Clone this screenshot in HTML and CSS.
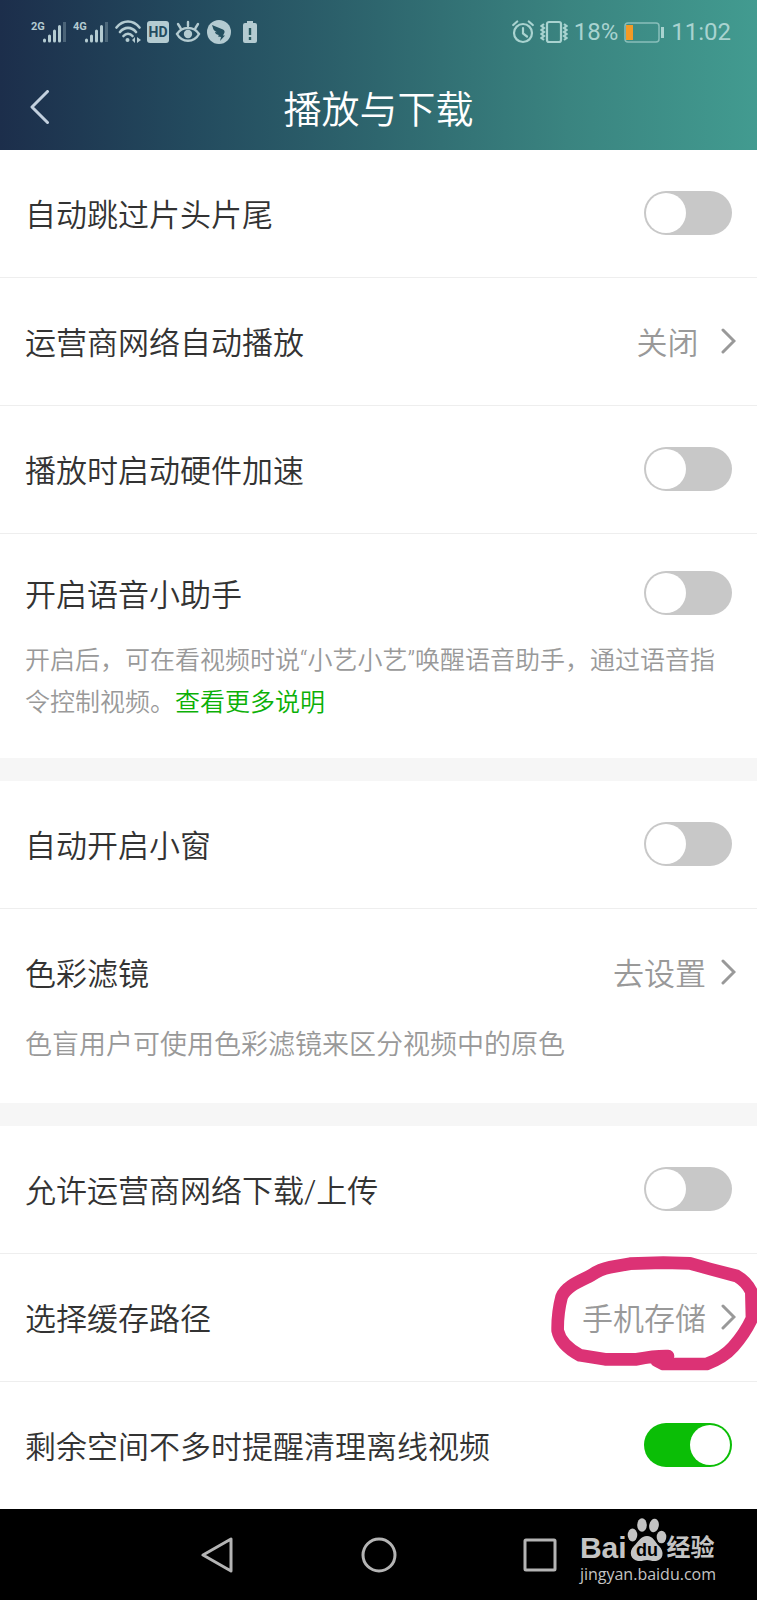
FILE: index.html
```html
<!DOCTYPE html>
<html lang="zh-CN">
<head>
  <meta charset="UTF-8">
  <meta name="viewport" content="width=device-width, initial-scale=1.0">
  <title>播放与下载</title>
  <link rel="stylesheet" href="styles.css">
</head>
<body>

<header class="header">
  <div class="status-bar">
    <div class="status-left">
      <svg width="36" height="24" viewBox="0 0 36 24">
        <text class="net" x="0" y="10">2G</text>
        <path d="M13.500 20v1M18.500 16v5M23.500 11v10M28.500 6.500v14.500" stroke="currentColor" stroke-width="3" stroke-linecap="round"/>
        <path d="M33.500 2v20" stroke="currentColor" stroke-width="3" opacity=".3"/>
      </svg>
      <svg width="36" height="24" viewBox="0 0 36 24">
        <text class="net" x="0" y="10">4G</text>
        <path d="M13.500 20v1M18.500 16v5M23.500 11v10M28.500 6.500v14.500" stroke="currentColor" stroke-width="3" stroke-linecap="round"/>
        <path d="M33.500 2v20" stroke="currentColor" stroke-width="3" opacity=".3"/>
      </svg>
      <svg width="26" height="24" viewBox="0 0 26 24" fill="none" stroke="currentColor" stroke-width="2.600" stroke-linecap="round">
        <path d="M1.500 7.500C8-.5 18-.5 24.500 7.500M5 12c4.500-5.500 11.500-5.500 16 0M8.500 16c2.500-3 6.500-3 9 0"/>
        <circle cx="12.500" cy="20" r="2" fill="currentColor" stroke="none"/>
        <path d="M20 17l-3 3 3 3zM22 17l4 3-4 3z" fill="currentColor" stroke="none"/>
      </svg>
      <svg width="22" height="24" viewBox="0 0 22 24">
        <rect x="0" y="1" width="22" height="22" rx="3" fill="currentColor"/>
        <text class="hd" x="11" y="17" text-anchor="middle">HD</text>
      </svg>
      <svg width="26" height="24" viewBox="0 0 26 24" fill="none" stroke="currentColor" stroke-width="2.400" stroke-linecap="round">
        <path d="M2 14c5-8 17-8 22 0-5 9-17 9-22 0zM13 2v4M3 4l2.500 4M23 4l-2.500 4"/>
        <circle cx="13" cy="14" r="4.200" fill="currentColor" stroke="none"/>
      </svg>
      <svg width="24" height="24" viewBox="0 0 24 24">
        <circle cx="12" cy="12" r="12" fill="currentColor"/>
        <path d="M5 5l11 4.500c1.500.8 2 2 1.300 3.500L16 15.500h2L13 21l1-4-3-.5.8-1.500C9 14.500 8 13 8 12l2 .2C7.500 11 6 9.500 6 8z" fill="#24505f"/>
      </svg>
      <svg class="low" width="14" height="24" viewBox="0 0 14 24">
        <path d="M4 1h6v2h2a2 2 0 0 1 2 2v16a2 2 0 0 1-2 2H2a2 2 0 0 1-2-2V5a2 2 0 0 1 2-2h2z" fill="currentColor"/>
        <path d="M7 8v7M7 17v3" stroke="#27585f" stroke-width="2.400"/>
      </svg>
    </div>
    <div class="status-right">
      <svg width="22" height="24" viewBox="0 0 22 24" fill="none" stroke="currentColor" stroke-width="2.200" stroke-linecap="round">
        <circle cx="11" cy="13" r="9"/>
        <path d="M11 8v5.500l4 3M1.200 5l4-3.500M20.800 5l-4-3.500"/>
      </svg>
      <svg class="vibrate" width="28" height="24" viewBox="0 0 28 24" fill="none" stroke="currentColor" stroke-width="2.200">
        <rect x="7" y="2" width="14" height="20" rx="2"/>
        <path d="M4 4L1.500 6 4 8 1.500 10 4 12l-2.500 2L4 16l-2.500 2L4 20M24 4l2.500 2L24 8l2.500 2-2.500 2 2.500 2-2.500 2 2.500 2-2.500 2"/>
      </svg>
      <span>18%</span>
      <svg class="battery" width="41" height="24" viewBox="0 0 41 24">
        <rect x="1" y="3" width="34" height="19" rx="3" fill="none" stroke="currentColor" stroke-width="1.500" opacity=".7"/>
        <rect x="2" y="5" width="7" height="15" fill="#f39a26"/>
        <path d="M38.500 7v11" stroke="currentColor" stroke-width="3"/>
      </svg>
      <span>11:02</span>
    </div>
  </div>
  <div class="title-bar">
    <button class="back-btn" aria-label="返回">
      <svg width="20" height="36" viewBox="0 0 20 36" fill="none" stroke="currentColor" stroke-width="3" stroke-linecap="round" stroke-linejoin="round">
        <path d="M17.500 1.500L2 17l15.500 15.500"/>
      </svg>
    </button>
    <h1>播放与下载</h1>
  </div>
</header>

<main>
  <section class="group">
    <label class="row">
      <span class="name">自动跳过片头片尾</span>
      <input type="checkbox" class="switch">
    </label>
    <button class="row">
      <span class="name">运营商网络自动播放</span>
      <span class="value">关闭&nbsp;</span>
      <svg class="arrow" viewBox="0 0 16 26"><path d="M3 2l11 11L3 24"/></svg>
    </button>
    <label class="row">
      <span class="name">播放时启动硬件加速</span>
      <input type="checkbox" class="switch">
    </label>
    <div class="block voice">
      <label class="line">
        <span class="name">开启语音小助手</span>
        <input type="checkbox" class="switch">
      </label>
      <p class="desc">开启后，可在看视频时说“小艺小艺”唤醒语音助手，通过语音指令控制视频。<a href="#">查看更多说明</a></p>
    </div>
  </section>

  <section class="group">
    <label class="row">
      <span class="name">自动开启小窗</span>
      <input type="checkbox" class="switch">
    </label>
    <div class="block filter">
      <button class="line">
        <span class="name">色彩滤镜</span>
        <span class="value">去设置</span>
        <svg class="arrow" viewBox="0 0 16 26"><path d="M3 2l11 11L3 24"/></svg>
      </button>
      <p class="desc">色盲用户可使用色彩滤镜来区分视频中的原色</p>
    </div>
  </section>

  <section class="group">
    <label class="row">
      <span class="name">允许运营商网络下载/上传</span>
      <input type="checkbox" class="switch">
    </label>
    <button class="row">
      <span class="name">选择缓存路径</span>
      <span class="value">手机存储</span>
      <svg class="arrow" viewBox="0 0 16 26"><path d="M3 2l11 11L3 24"/></svg>
      <!-- 手绘圈 -->
      <svg class="marker" viewBox="0 0 681 480">
        <path d="M414 378C380 377 360 380 320 388H225L150 376C120 360 90 335 83 302Q82 250 95 200C110 165 160 150 185 135Q210 118 240 112L300 101L400 98L480 100L540 117L620 138Q650 155 664 185L666 265Q645 310 610 350Q580 384 530 402H400L380 392"/>
      </svg>
    </button>
    <label class="row">
      <span class="name">剩余空间不多时提醒清理离线视频</span>
      <input type="checkbox" class="switch" checked>
    </label>
  </section>
</main>

<nav class="nav-bar">
  <button aria-label="返回">
    <svg width="36" height="36" viewBox="0 0 36 36"><path d="M31 2v32L3 18z"/></svg>
  </button>
  <button aria-label="主页">
    <svg width="36" height="36" viewBox="0 0 36 36"><circle cx="18" cy="18" r="16"/></svg>
  </button>
  <button aria-label="最近任务">
    <svg width="36" height="36" viewBox="0 0 36 36"><rect x="3" y="3" width="30" height="30" rx="1"/></svg>
  </button>
  <div class="watermark">
    <div class="brand">
      <span class="bai">Bai</span>
      <svg width="40" height="44" viewBox="0 0 40 44">
        <ellipse cx="5.500" cy="17" rx="4.800" ry="6.500"/>
        <ellipse cx="15" cy="7" rx="4.800" ry="6.800"/>
        <ellipse cx="27" cy="7.500" rx="4.800" ry="6.800" transform="rotate(10 27 7.500)"/>
        <ellipse cx="34.500" cy="19" rx="4.800" ry="6.300"/>
        <path d="M20 18c6 0 8 6 12 10 6 6 4 14-3 15-4 .5-6-1-9-1s-5 1.500-9 1C4 42 1 34 7 28c4-4 7-10 13-10z"/>
        <text x="20" y="38" text-anchor="middle">du</text>
      </svg>
      <span class="jy">经验</span>
    </div>
    <div class="site">jingyan.baidu.com</div>
  </div>
</nav>

</body>
</html>
```

FILE: styles.css
```css
* {
  box-sizing: border-box;
  margin: 0;
  padding: 0;
}

body {
  font-family: Roboto, "Noto Sans CJK SC", sans-serif;
  font-weight: 350;
  background-color: #fff;
  color: #333;
}

svg {
  display: block;
  flex: none;
}

button {
  background: none;
  border: none;
  font: inherit;
  color: inherit;
  text-align: left;
  cursor: pointer;
}

/* header */
.header {
  background: linear-gradient(90deg, #1c2e4b 0%, #234a5e 25%, #2e666e 50%, #3a8480 75%, #429b90 100%);
  color: #fff;
}

.status-bar {
  display: flex;
  justify-content: space-between;
  padding: 20px 26px 0 31px;
  color: #b4cbd1;
  font-size: 24px;
  font-weight: 400;
  line-height: 24px;
}

.status-left,
.status-right {
  display: flex;
  align-items: center;
  gap: 6px;
}

.status-right {
  color: #a9d3d0;
}

.net {
  font-size: 11px;
  font-weight: 700;
  fill: currentColor;
}

.hd {
  font-size: 14px;
  font-weight: 700;
  fill: #234a5e;
}

.low {
  margin-left: 6px;
}

.title-bar {
  display: grid;
  grid-template-columns: 1fr auto 1fr;
  align-items: center;
  height: 84px;
  margin-top: 22px;
  padding: 0 30px;
}

.back-btn {
  color: #c3d0de;
}

h1 {
  padding-top: 4px;
  font-size: 38px;
  font-weight: 350;
  line-height: 44px;
}

/* settings */
.group + .group {
  border-top: 23px solid #f6f6f6;
}

.row,
.line {
  display: flex;
  align-items: center;
  width: 100%;
  cursor: pointer;
}

.row {
  position: relative;
  padding: 41px 25px 42px;
  border-bottom: 1px solid #eee;
}

.row:last-child {
  border-bottom: none;
}

.name,
.value {
  padding-top: 6px;
  font-size: 31px;
  line-height: 38px;
}

.name {
  flex: 1;
}

.value {
  color: #999;
}

.arrow {
  width: 16px;
  height: 26px;
  margin: 0 -4px 0 14px;
  fill: none;
  stroke: #999;
  stroke-width: 3;
  stroke-linecap: round;
}

.switch {
  appearance: none;
  flex: none;
  width: 88px;
  height: 44px;
  padding: 2px;
  border-radius: 22px;
  background-color: #c8c8c8;
  cursor: pointer;
}

.switch::before {
  content: '';
  display: block;
  width: 40px;
  height: 40px;
  border-radius: 50%;
  background-color: #fff;
}

.switch:checked {
  background-color: #0bbe06;
}

.switch:checked::before {
  margin-left: auto;
}

.block {
  padding: 37px 25px 34px;
}

.desc {
  margin-top: 25px;
  font-size: 25px;
  line-height: 42px;
  color: #999;
}

.filter {
  padding: 41px 25px 37px;
}

.filter .desc {
  margin-top: 30px;
  font-size: 27px;
}

.desc a {
  color: #0bb006;
  text-decoration: none;
}

.marker {
  position: absolute;
  top: -24px;
  right: 0;
  width: 227px;
  height: 160px;
  fill: none;
  stroke: #dc3275;
  stroke-width: 38;
  stroke-linecap: round;
  stroke-linejoin: round;
  pointer-events: none;
}

/* navigation */
.nav-bar {
  position: relative;
  display: flex;
  justify-content: center;
  align-items: center;
  gap: 125px;
  height: 91px;
  background-color: #000;
}

.nav-bar button svg {
  fill: none;
  stroke: #b4b4b4;
  stroke-width: 3;
  stroke-linejoin: round;
}

.watermark {
  position: absolute;
  right: 41px;
  bottom: 14px;
  color: #c4c4c4;
}

.brand {
  display: flex;
  align-items: flex-end;
  line-height: 28px;
  font-weight: 700;
}

.bai {
  font-family: "Liberation Sans", sans-serif;
  font-size: 30px;
}

.brand svg {
  fill: currentColor;
}

.brand text {
  font-family: "Liberation Sans", sans-serif;
  font-size: 18px;
  fill: #000;
}

.jy {
  font-size: 24px;
}

.site {
  font-family: "Open Sans", sans-serif;
  font-size: 16px;
  font-weight: 400;
  line-height: 24px;
}
```
